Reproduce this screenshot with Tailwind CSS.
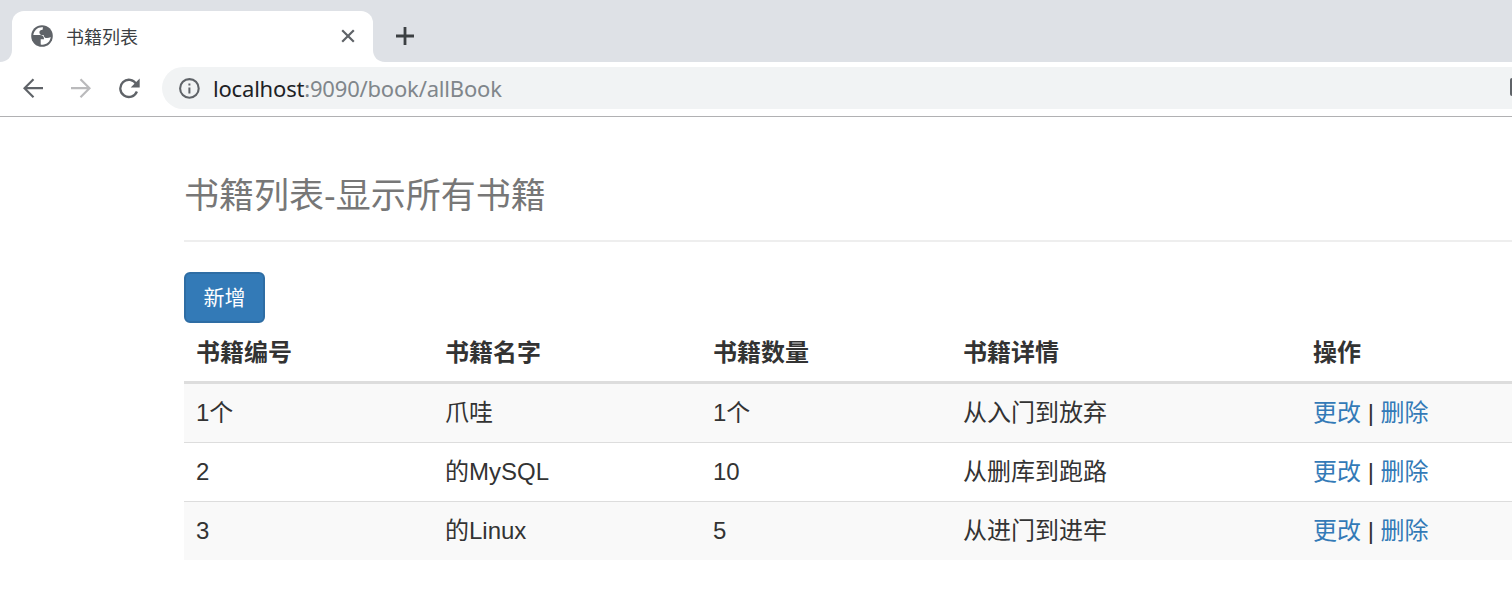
<!DOCTYPE html>
<html lang="zh-CN">
<head>
<meta charset="utf-8">
<title>书籍列表</title>
<script src="https://cdn.jsdelivr.net/npm/@tailwindcss/browser@4"></script>
</head>
<body class="h-[592px] w-[1512px] overflow-hidden bg-white font-['Liberation_Sans','Noto_Sans_CJK_SC',sans-serif] text-[24px] text-[#333]">
<header class="h-[117px] border-b border-[#b1b1b3]">
  <div class="flex h-[62px] items-end bg-[#dee1e6]">
    <svg class="h-3 w-3 shrink-0" viewBox="0 0 12 12"><path d="M12 0v12H0C7 12 12 7 12 0z" fill="#fff"/></svg>
    <div class="flex h-[51px] w-[361px] shrink-0 items-center rounded-t-[12px] bg-white pb-px pl-[19px] pr-[18px]">
      <svg class="h-[22px] w-[22px]" viewBox="0 0 22 22"><circle cx="11" cy="11" r="10.800" fill="#5f6368"/><path d="M12 2.300C7 1.700 2.900 5.300 2.300 10h6.500c2.800 0 4.400 1.500 4.200 4.200H9.700v5.300c5 1 9.600-2.400 10-7.500-1 .7-2.200 1-3.700 1-2.200 0-3.200-1-3.400-3.100-2.600.2-4.200-.6-4.200-2.500 0-2 1.200-2.600 3.200-2.700z" fill="#fff"/></svg>
      <span class="ml-[13px] pt-1 text-[18px] leading-6 text-[#3c4043]">书籍列表</span>
      <svg class="ml-auto h-[14px] w-[14px]" viewBox="0 0 14 14"><path d="M1.200 1.200l11.600 11.600M12.800 1.200L1.200 12.800" stroke="#5f6368" stroke-width="2.200"/></svg>
    </div>
    <svg class="h-3 w-3 shrink-0" viewBox="0 0 12 12"><path d="M0 0v12h12C5 12 0 7 0 0z" fill="#fff"/></svg>
    <svg class="mb-[17px] ml-[11px] h-[18px] w-[18px]" viewBox="0 0 18 18"><path d="M9 0v18M0 9h18" stroke="#3c4043" stroke-width="2.800"/></svg>
  </div>
  <div class="flex h-[52px] items-center pl-[23px]">
    <svg class="h-5 w-5" viewBox="0 0 20 20" fill="none" stroke="#5f6368" stroke-width="2.200"><path d="M20 10.200H2M10.500 1.200L1.500 10.200l9 9"/></svg>
    <svg class="ml-7 h-5 w-5" viewBox="0 0 20 20" fill="none" stroke="#bababc" stroke-width="2.200"><path d="M0 10.200h18M9.500 1.200l9 9-9 9"/></svg>
    <svg class="ml-[27px] h-[22px] w-[22px]" viewBox="0 0 22 22"><path d="M18.300 7A8.600 8.600 0 1 0 18.900 14.500" fill="none" stroke="#5f6368" stroke-width="2.300"/><path d="M21.700 1.500v9h-9z" fill="#5f6368"/></svg>
    <div class="ml-[22px] flex h-[42px] flex-1 items-center rounded-l-full bg-[#f1f3f4] pl-4">
      <svg class="h-[22px] w-[22px]" viewBox="0 0 22 22"><circle cx="11.400" cy="11.400" r="9.300" fill="none" stroke="#5f6368" stroke-width="2.100"/><path d="M10.400 10.400h2v6h-2zM10.400 6.400h2v2h-2z" fill="#5f6368"/></svg>
      <span class="ml-[13px] whitespace-nowrap font-['Noto_Sans','Open_Sans',sans-serif] text-[22px] leading-7 tracking-[-0.19px] text-[#80868b]"><span class="text-[#202124]">localhost</span>:9090/book/allBook</span>
      <span class="mb-[2px] ml-auto h-[18px] w-[2px] rounded-l-sm bg-[#5f6368]"></span>
    </div>
  </div>
</header>
<main class="pl-[184px] pt-[58px]">
  <h1 class="h-[67px] border-b-2 border-[#eee] pt-px text-[35px] font-normal leading-[40px] text-[#777]">书籍列表-显示所有书籍</h1>
  <button class="mt-[30px] block h-[51px] w-[81px] rounded-[6px] border-2 border-[#2e6da4] bg-[#337ab7] text-[21px] leading-[47px] text-white">新增</button>
  <table class="w-full table-fixed border-separate border-spacing-0 text-left [&_td]:px-3 [&_th]:px-3">
    <colgroup><col class="w-[249px]"><col class="w-[268px]"><col class="w-[250px]"><col class="w-[350px]"><col></colgroup>
    <thead class="[&_th]:border-b-3 [&_th]:border-[#ddd] [&_th]:pt-[2px]"><tr class="h-[61px]"><th>书籍编号</th><th>书籍名字</th><th>书籍数量</th><th>书籍详情</th><th>操作</th></tr></thead>
    <tbody class="[&_a]:text-[#337ab7]">
      <tr class="h-[59px] bg-[#f9f9f9] [&_td]:border-b [&_td]:border-[#ddd]"><td>1个</td><td>爪哇</td><td>1个</td><td>从入门到放弃</td><td><a href="#">更改</a> | <a href="#">删除</a></td></tr>
      <tr class="h-[59px] [&_td]:border-b [&_td]:border-[#ddd]"><td>2</td><td>的MySQL</td><td>10</td><td>从删库到跑路</td><td><a href="#">更改</a> | <a href="#">删除</a></td></tr>
      <tr class="h-[58px] bg-[#f9f9f9]"><td>3</td><td>的Linux</td><td>5</td><td>从进门到进牢</td><td><a href="#">更改</a> | <a href="#">删除</a></td></tr>
    </tbody>
  </table>
</main>
</body>
</html>
